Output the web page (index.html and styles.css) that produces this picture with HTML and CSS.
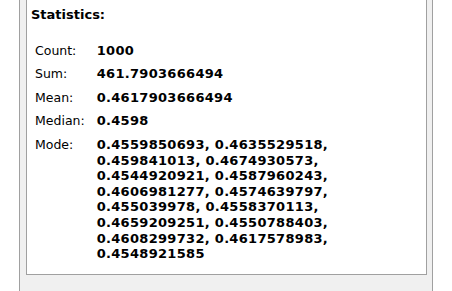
FILE: index.html
```html
<!DOCTYPE html>
<html lang="en">
<head>
  <meta charset="UTF-8">
  <meta name="viewport" content="width=device-width, initial-scale=1.0">
  <title>Statistics</title>
  <link rel="stylesheet" href="styles.css">
</head>
<body>
  <div class="panel">
    <div class="stats-box">
      <h2 class="stats-title">Statistics:</h2>
      <table class="stats-table">
        <tr>
          <td class="stat-label">Count:</td>
          <td class="stat-value">1000</td>
        </tr>
        <tr>
          <td class="stat-label">Sum:</td>
          <td class="stat-value">461.7903666494</td>
        </tr>
        <tr>
          <td class="stat-label">Mean:</td>
          <td class="stat-value">0.4617903666494</td>
        </tr>
        <tr>
          <td class="stat-label">Median:</td>
          <td class="stat-value">0.4598</td>
        </tr>
        <tr>
          <td class="stat-label">Mode:</td>
          <td class="stat-value">0.4559850693, 0.4635529518, 0.459841013, 0.4674930573, 0.4544920921, 0.4587960243, 0.4606981277, 0.4574639797, 0.455039978, 0.4558370113, 0.4659209251, 0.4550788403, 0.4608299732, 0.4617578983, 0.4548921585</td>
        </tr>
      </table>
    </div>
  </div>
</body>
</html>
```

FILE: styles.css
```css
html, body {
  height: 100%;
}

body {
  margin: 0;
  background-color: #fff;
  color: #000;
  font-family: 'DejaVu Sans', Verdana, sans-serif;
  font-size: 13px;
}

.panel {
  box-sizing: border-box;
  width: 414px;
  min-height: 100%;
  margin-left: 19px;
  padding: 0 5px 16px 6px;
  background-color: #f0f0f0;
  border-left: 1px solid #a0a0a0;
  border-right: 1px solid #a0a0a0;
}

.stats-box {
  background-color: #fff;
  border: 1px solid #a0a0a0;
  border-top: none;
  padding: 7px 4px 8px 4px;
}

.stats-title {
  margin: 0 0 16px 0;
  font-size: 13px;
  font-weight: bold;
  line-height: 15.6px;
}

.stats-table {
  border-collapse: collapse;
  border-spacing: 0;
}

.stats-table td {
  vertical-align: top;
  line-height: 15.6px;
  padding: 4px;
}

.stat-label {
  font-size: 12.5px;
  padding-right: 8px !important;
  white-space: nowrap;
}

.stat-value {
  font-weight: bold;
  letter-spacing: 0.3px;
}
```
